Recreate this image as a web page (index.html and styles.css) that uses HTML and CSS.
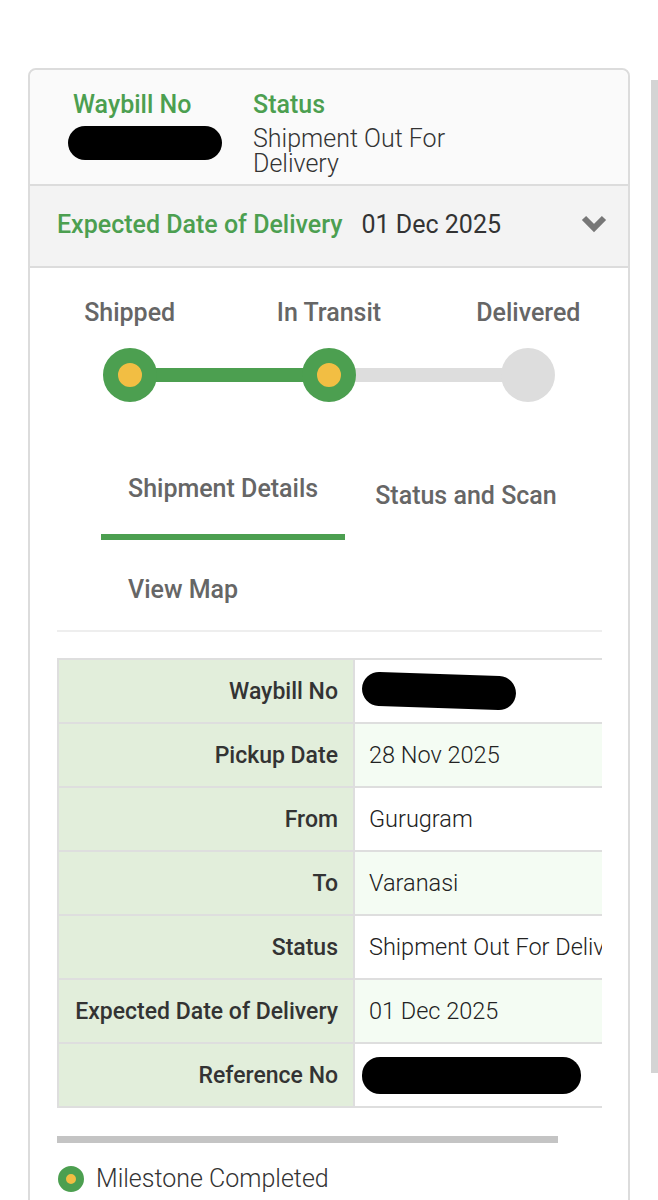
FILE: index.html
```html
<!DOCTYPE html>
<html lang="en">
<head>
<meta charset="UTF-8">
<meta name="viewport" content="width=device-width, initial-scale=1.0">
<title>Track Shipment</title>
<link rel="stylesheet" href="styles.css">
</head>
<body>
<div class="card">
    <div class="summary">
        <div class="summary-col waybill">
            <div class="summary-label">Waybill No</div>
            <div class="redacted redacted-head"></div>
        </div>
        <div class="summary-col status">
            <div class="summary-label">Status</div>
            <div class="summary-value">Shipment Out For Delivery</div>
        </div>
    </div>

    <div class="edd-bar">
        <span class="edd-label">Expected Date of Delivery</span>
        <span class="edd-value">01 Dec 2025</span>
        <svg class="chevron" width="26" height="18" viewBox="0 0 26 18">
            <polyline points="3,3 13,13 23,3" fill="none" stroke="#777" stroke-width="6"/>
        </svg>
    </div>

    <div class="tracker">
        <div class="step done line-done">
            <div class="step-label">Shipped</div>
            <div class="dot"></div>
        </div>
        <div class="step done">
            <div class="step-label">In Transit</div>
            <div class="dot"></div>
        </div>
        <div class="step">
            <div class="step-label">Delivered</div>
            <div class="dot"></div>
        </div>
    </div>

    <div class="content">
        <div class="tabs">
            <div class="tab active">Shipment Details</div>
            <div class="tab second">Status and Scan</div>
            <div class="tab">View Map</div>
        </div>

        <div class="table-wrap">
            <table class="details">
                <tr>
                    <th>Waybill No</th>
                    <td><div class="redacted redacted-waybill"></div></td>
                </tr>
                <tr class="alt">
                    <th>Pickup Date</th>
                    <td>28 Nov 2025</td>
                </tr>
                <tr>
                    <th>From</th>
                    <td>Gurugram</td>
                </tr>
                <tr class="alt">
                    <th>To</th>
                    <td>Varanasi</td>
                </tr>
                <tr>
                    <th>Status</th>
                    <td>Shipment Out For Delivery</td>
                </tr>
                <tr class="alt">
                    <th>Expected Date of Delivery</th>
                    <td>01 Dec 2025</td>
                </tr>
                <tr>
                    <th>Reference No</th>
                    <td><div class="redacted redacted-ref"></div></td>
                </tr>
            </table>
        </div>

        <div class="legend-rule"></div>
        <div class="legend">
            <span class="legend-dot"></span>
            Milestone Completed
        </div>
    </div>
</div>
<div class="scroll-thumb"></div>
</body>
</html>
```

FILE: styles.css
```css
* {
    margin: 0;
    padding: 0;
    box-sizing: border-box;
    font-family: Roboto, 'Liberation Sans', sans-serif;
}
html, body {
    overflow: hidden;
}
body {
    background-color: #ffffff;
    color: #333333;
}
.card {
    margin: 68px 28px 0 28px;
    border: 2px solid #dcdcdc;
    border-radius: 8px 8px 0 0;
    background: #ffffff;
    padding-bottom: 60px;
}

/* top summary */
.summary {
    display: flex;
    background: #fafafa;
    padding: 20px 0 8px 43px;
    border-radius: 8px 8px 0 0;
}
.summary-col.waybill {
    width: 180px;
}
.summary-col.status {
    width: 230px;
}
.summary-label {
    color: #4c9f50;
    font-size: 25px;
    font-weight: 500;
    line-height: 30px;
    margin-bottom: 6px;
}
.summary-value {
    font-size: 25px;
    font-weight: 300;
    line-height: 25px;
    color: #333;
}
.redacted {
    background: #000;
    border-radius: 18px;
}
.redacted-head {
    width: 154px;
    height: 34px;
    margin-left: -5px;
}

/* expected date bar */
.edd-bar {
    display: flex;
    align-items: center;
    height: 84px;
    padding: 0 21px 4px 27px;
    background: #f3f3f3;
    border-top: 2px solid #dcdcdc;
    border-bottom: 2px solid #dcdcdc;
    font-size: 25px;
}
.edd-label {
    color: #4c9f50;
    font-weight: 500;
    margin-right: 19px;
}
.edd-value {
    color: #333;
}
.chevron {
    margin-left: auto;
}

/* progress tracker */
.tracker {
    display: flex;
    padding-top: 30px;
}
.step {
    flex: 1;
    display: flex;
    flex-direction: column;
    align-items: center;
    position: relative;
}
.step-label {
    font-size: 25px;
    font-weight: 500;
    line-height: 30px;
    color: #666;
    margin-bottom: 20px;
}
.dot {
    width: 54px;
    height: 54px;
    border-radius: 50%;
    background: #dddddd;
    position: relative;
    z-index: 1;
}
.step.done .dot {
    background: #f2be43;
    border: 15px solid #4c9f50;
}
.step:not(:last-child)::after {
    content: '';
    position: absolute;
    left: 50%;
    top: 70px;
    width: 100%;
    height: 14px;
    background: #dddddd;
}
.step.line-done::after {
    background: #4c9f50;
}

/* tabs + table */
.content {
    padding: 0 26px 0 27px;
}
.tabs {
    display: flex;
    flex-wrap: wrap;
    row-gap: 35px;
    margin-top: 72px;
    padding: 0 0 25px 44px;
    border-bottom: 2px solid #eeeeee;
}
.tab {
    font-size: 25px;
    font-weight: 500;
    line-height: 30px;
    color: #666;
    padding: 0 27px;
}
.tab.active {
    padding-bottom: 30px;
    border-bottom: 6px solid #4c9f50;
}
.tab.second {
    padding-top: 7px;
    padding-left: 30px;
}
.table-wrap {
    margin-top: 26px;
    overflow: hidden;
}
.details {
    width: 640px;
    border-collapse: collapse;
}
.details th, .details td {
    height: 64px;
    border: 2px solid #dedede;
}
.details th {
    width: 296px;
    background: #e2eedb;
    text-align: right;
    font-size: 23px;
    font-weight: 500;
    color: #333;
    padding-right: 15px;
}
.details td {
    text-align: left;
    padding-left: 14px;
    white-space: nowrap;
    font-size: 23.5px;
    font-weight: 300;
    color: #222;
}
.details tr.alt td {
    background: #f4fcf3;
}
.redacted-waybill {
    width: 154px;
    height: 34px;
    margin-left: -7px;
    transform: rotate(2deg);
}
.redacted-ref {
    width: 219px;
    height: 37px;
    margin-left: -7px;
}
.legend-rule {
    width: 501px;
    height: 7px;
    background: #c4c4c4;
    margin-top: 28px;
}
.legend {
    display: flex;
    align-items: center;
    margin-top: 21px;
    font-size: 25px;
    font-weight: 300;
    line-height: 30px;
    color: #333;
}
.legend-dot {
    width: 26px;
    height: 26px;
    border-radius: 50%;
    background: #f2be43;
    border: 8px solid #4c9f50;
    margin: 0 12px 0 1px;
}
.scroll-thumb {
    position: fixed;
    right: 0;
    top: 80px;
    width: 7px;
    height: 993px;
    background: #d4d4d4;
}
```
